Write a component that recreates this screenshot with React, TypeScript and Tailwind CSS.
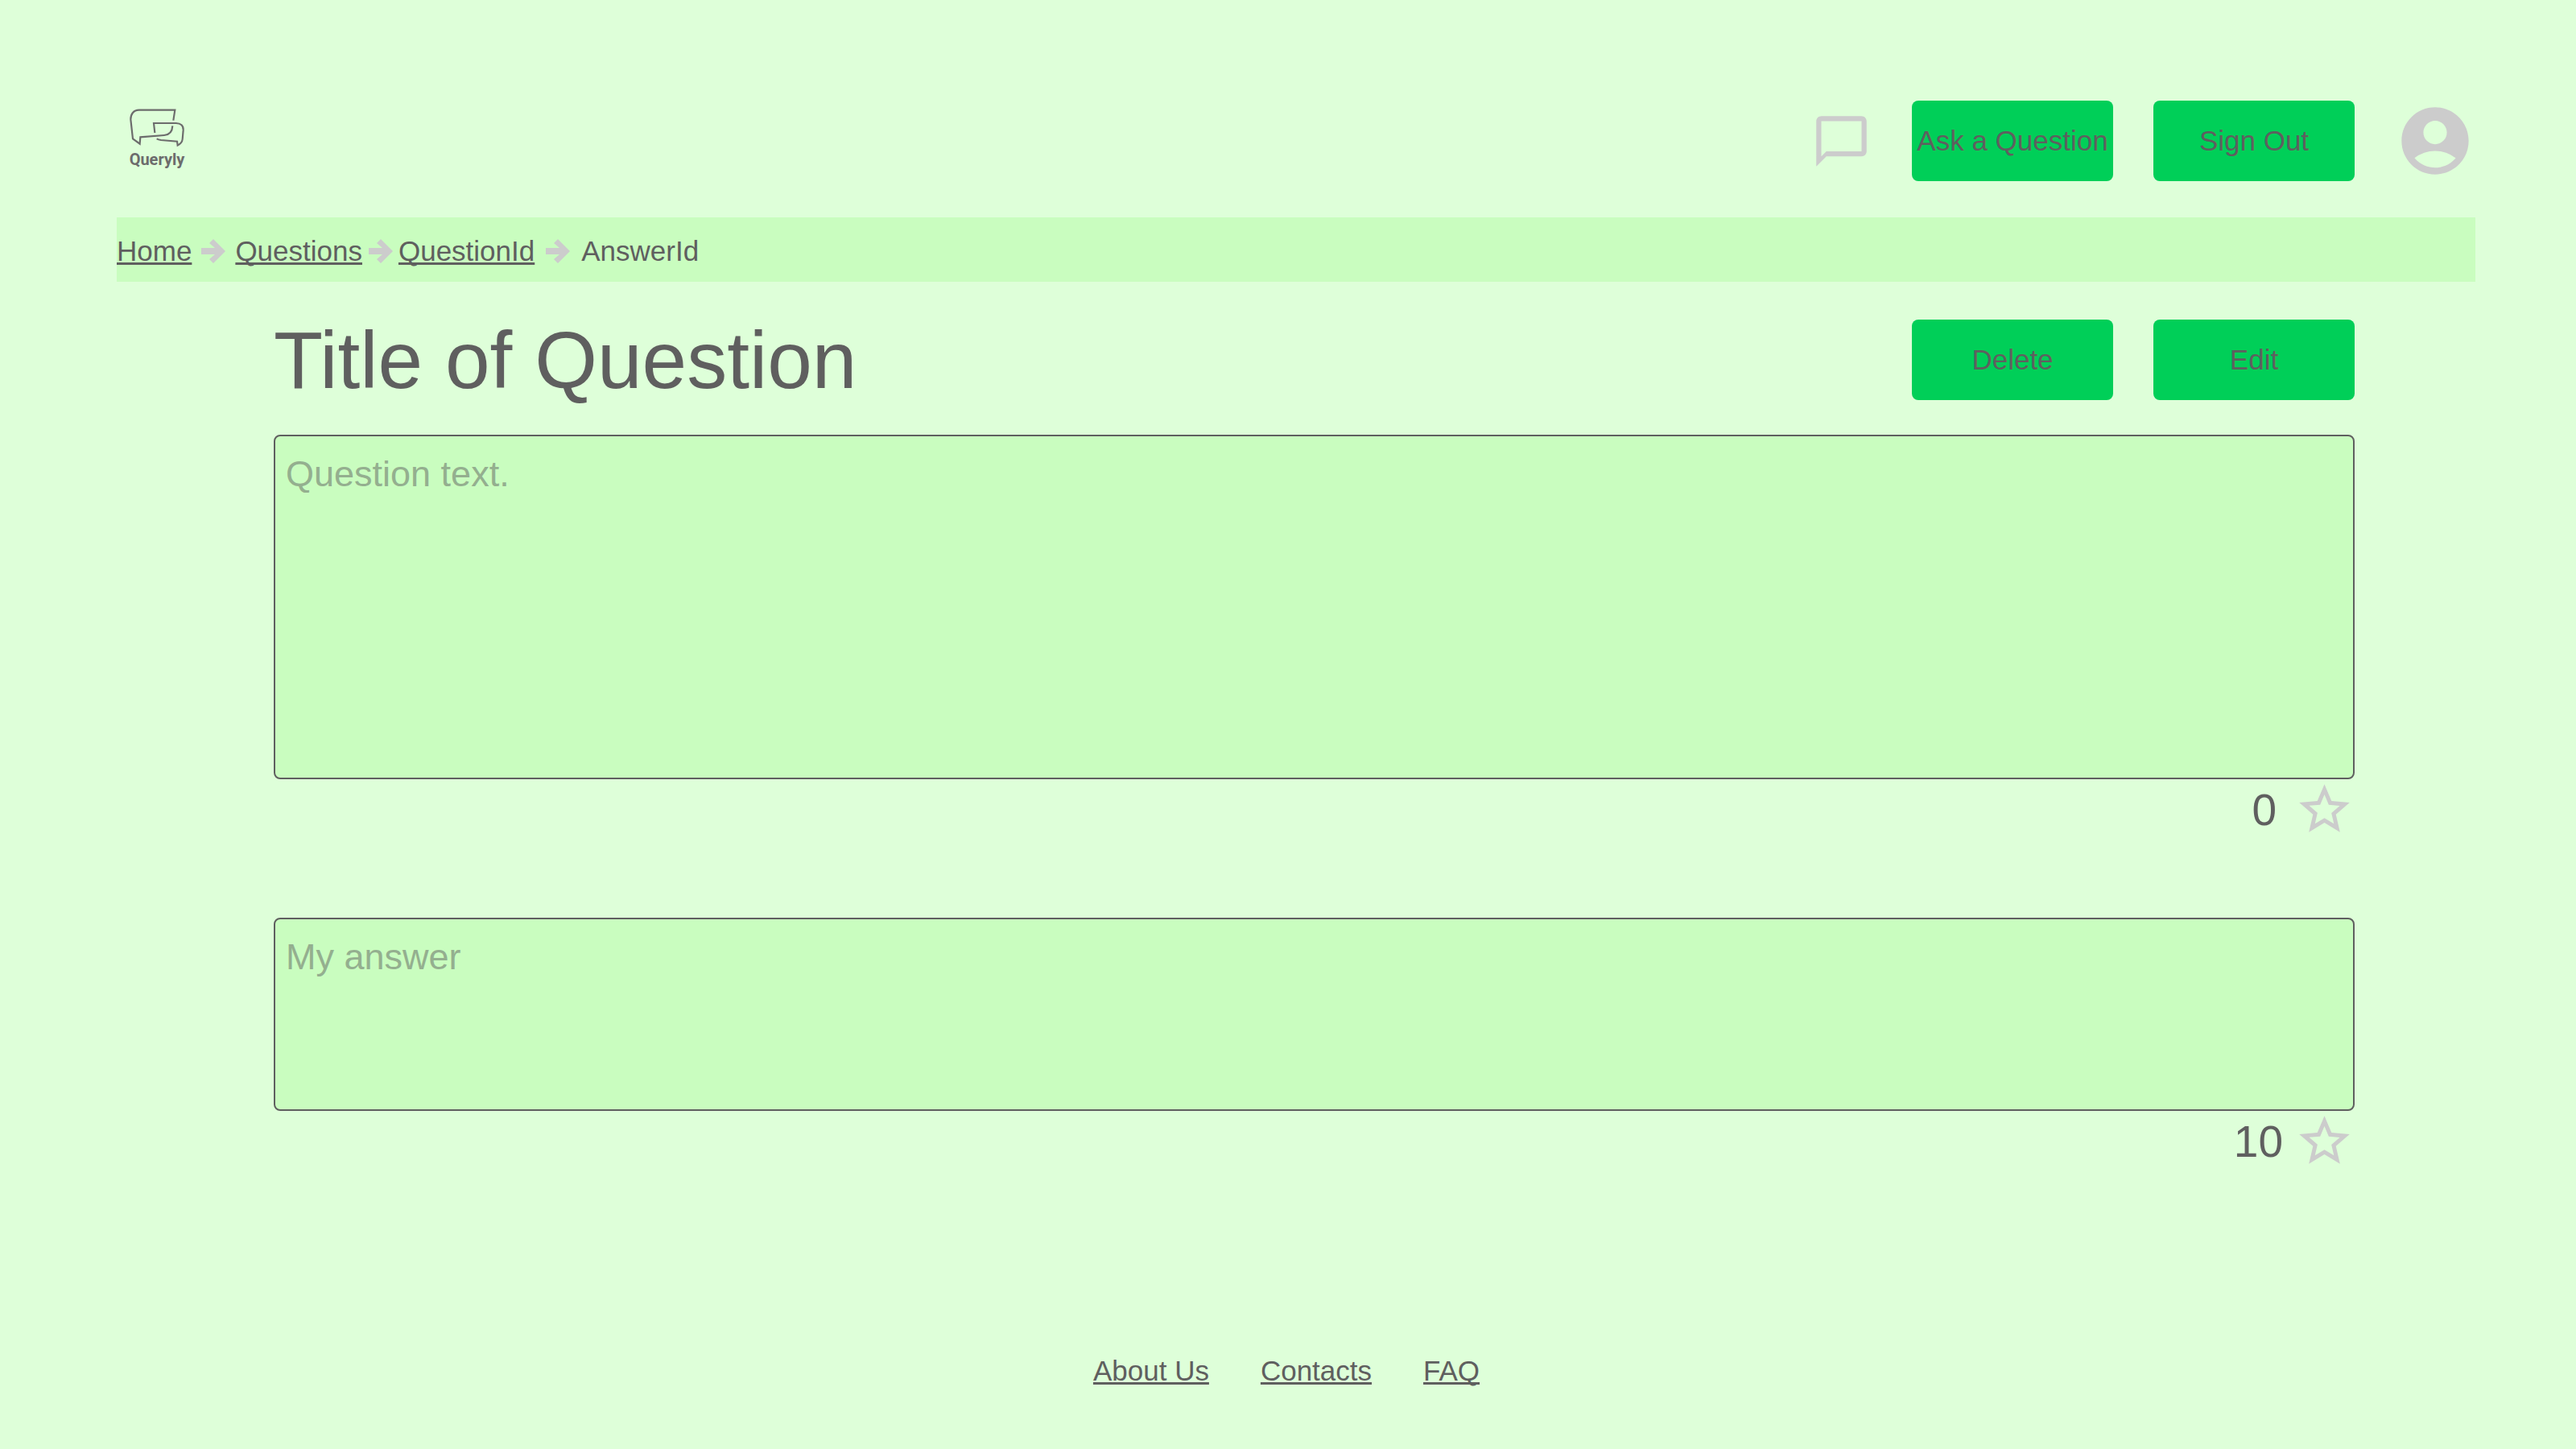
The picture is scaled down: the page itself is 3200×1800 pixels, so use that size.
import type { ReactNode } from "react";
import { MdAccountCircle, MdChatBubbleOutline, MdStarOutline } from "react-icons/md";

function Logo() {
  return (
    <a href="#" className="flex w-[100px] flex-col items-center gap-[3px] self-start pt-[8px] text-[#6c6c6c]">
      <svg
        viewBox="90 66 210 150"
        className="h-[50px] w-[70px]"
        fill="none"
        stroke="currentColor"
        strokeWidth="6.5"
        aria-hidden="true"
      >
        <path d="M256 116 L262 77 H128 C108 77 97 92 97 112 L105 184 L131 203 L133 178 L222 171 C242 169 252 156 253 136" />
        <path d="M187 162 L183 126 H266 C284 126 294 136 293 152 L290 186 C289 196 285 202 272 209 L270 194 L210 189 C203 188 199 187 194 184" />
      </svg>
      <span className="font-['Roboto'] text-[20px] leading-[24px] font-bold">Queryly</span>
    </a>
  );
}

function ActionButton({ children }: { children: ReactNode }) {
  return (
    <button
      type="button"
      className="h-[100px] w-[250px] shrink-0 rounded-[8px] bg-[#00cf58] text-center whitespace-nowrap"
    >
      {children}
    </button>
  );
}

function TextLink({ children }: { children: ReactNode }) {
  return (
    <a href="#" className="underline [text-decoration-skip-ink:none]">
      {children}
    </a>
  );
}

function Arrow() {
  return (
    <svg viewBox="0 0 30 30" className="size-[30px] fill-[#cccccc]" aria-hidden="true">
      <path d="M15 0 L30 15 L15 30 L10 25 L17 19 H0 V11 H17 L10 5 Z" />
    </svg>
  );
}

function Post({ label, height, score, gap }: { label: string; height: string; score: number; gap: string }) {
  return (
    <section>
      <textarea
        aria-label={label}
        placeholder={label}
        className={`block w-full resize-none rounded-[8px] border-2 border-[#5f5f5f] bg-[#c9fdbf] px-[13px] pt-[21px] text-[45px] leading-[52px] outline-none placeholder:text-[#94af8f] ${height}`}
      />
      <div className={`flex items-center justify-end ${gap}`}>
        <span className="text-[55px] leading-[64px]">{score}</span>
        <button type="button" aria-label="Add to favourites">
          <MdStarOutline className="size-[75px] text-[#cccccc]" />
        </button>
      </div>
    </section>
  );
}

export default function App() {
  return (
    <div className="min-h-screen bg-[#deffd9] font-['Liberation_Sans',Arial,sans-serif] text-[35px] leading-[40px] text-[#5f5f5f]">
      <div className="pt-[125px] pr-[125px] pl-[145px]">
        <header className="flex items-center justify-between">
          <Logo />
          <div className="flex items-center gap-[50px]">
            <button type="button" aria-label="Messages">
              <MdChatBubbleOutline className="size-[75px] text-[#cccccc]" />
            </button>
            <ActionButton>Ask a Question</ActionButton>
            <ActionButton>Sign Out</ActionButton>
            <button type="button" aria-label="Account">
              <MdAccountCircle className="size-[100px] text-[#cccccc]" />
            </button>
          </div>
        </header>

        <nav aria-label="Breadcrumb" className="mt-[45px] flex h-[80px] items-center bg-[#c9fdbf] pt-[4px]">
          <div className="flex items-center gap-[12px]">
            <TextLink>Home</TextLink>
            <Arrow />
            <TextLink>Questions</TextLink>
          </div>
          <div className="ml-[8px] flex items-center gap-[7px]">
            <Arrow />
            <TextLink>QuestionId</TextLink>
          </div>
          <div className="ml-[14px] flex items-center gap-[14px]">
            <Arrow />
            <span>AnswerId</span>
          </div>
        </nav>

        <main className="mt-[47px] pr-[150px] pl-[195px]">
          <div className="flex items-center justify-between">
            <h1 className="text-[100px] leading-[100px]">Title of Question</h1>
            <div className="flex gap-[50px]">
              <ActionButton>Delete</ActionButton>
              <ActionButton>Edit</ActionButton>
            </div>
          </div>
          <div className="mt-[43px] flex flex-col gap-[97px]">
            <Post label="Question text." height="h-[428px]" score={0} gap="gap-[22px]" />
            <Post label="My answer" height="h-[240px]" score={10} gap="gap-[14px]" />
          </div>
        </main>
      </div>

      <footer className="mt-[228px] flex justify-center pr-[4px]">
        <nav aria-label="Footer" className="flex gap-[64px]">
          <TextLink>About Us</TextLink>
          <TextLink>Contacts</TextLink>
          <TextLink>FAQ</TextLink>
        </nav>
      </footer>
    </div>
  );
}
